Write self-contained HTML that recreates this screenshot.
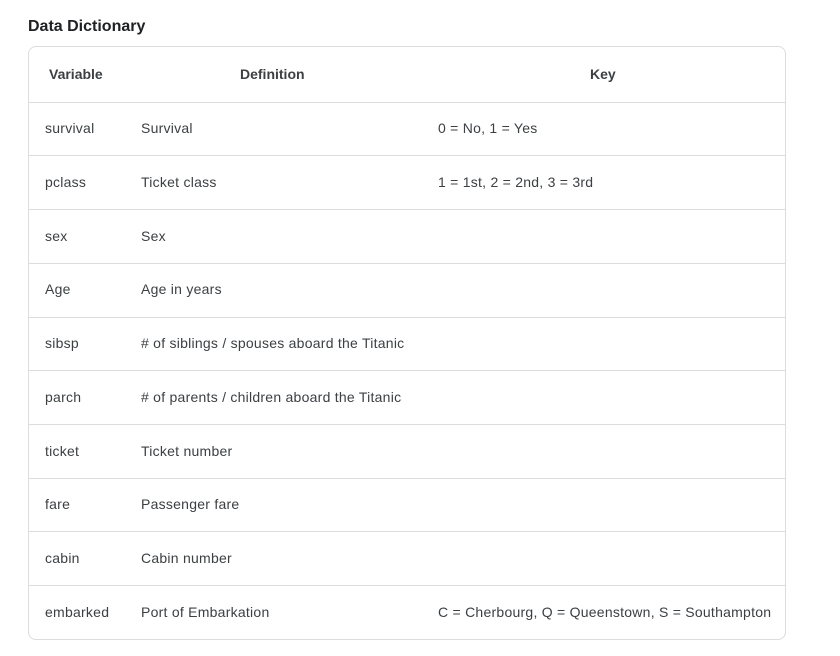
<!DOCTYPE html>
<html><head><meta charset="utf-8"><style>
body{margin:0;background:#fff;font-family:"Liberation Sans",Arial,sans-serif;color:#3c4043;width:840px;height:656px;overflow:hidden;position:relative}
h1{position:absolute;left:28px;top:18px;margin:0;font-size:16px;font-weight:bold;color:#202124}
.box{position:absolute;left:28px;top:46px;width:756px;height:592px;border:1px solid #dadce0;border-radius:8px;box-sizing:content-box}
.row{position:absolute;left:0;width:756px;font-size:14px;letter-spacing:0.25px}
.row div{position:absolute;top:0;white-space:nowrap}
.line{position:absolute;left:0;width:756px;height:1px;background:#dadce0}
.hd{font-weight:bold;font-size:14px;letter-spacing:0;color:#3c4043}
</style></head><body>
<h1>Data Dictionary</h1>
<div class="box">
<div class="row hd" style="top:19px"><div style="left:20px">Variable</div><div style="left:211px">Definition</div><div style="left:561px">Key</div></div>
<div class="line" style="top:55px"></div>
<div class="row" style="top:73px"><div style="left:16px">survival</div><div style="left:112px">Survival</div><div style="left:409px">0 = No, 1 = Yes</div></div>
<div class="line" style="top:108px"></div>
<div class="row" style="top:127px"><div style="left:16px">pclass</div><div style="left:112px">Ticket class</div><div style="left:409px">1 = 1st, 2 = 2nd, 3 = 3rd</div></div>
<div class="line" style="top:162px"></div>
<div class="row" style="top:181px"><div style="left:16px">sex</div><div style="left:112px">Sex</div></div>
<div class="line" style="top:216px"></div>
<div class="row" style="top:234px"><div style="left:16px">Age</div><div style="left:112px">Age in years</div></div>
<div class="line" style="top:270px"></div>
<div class="row" style="top:288px"><div style="left:16px">sibsp</div><div style="left:112px"># of siblings / spouses aboard the Titanic</div></div>
<div class="line" style="top:323px"></div>
<div class="row" style="top:342px"><div style="left:16px">parch</div><div style="left:112px"># of parents / children aboard the Titanic</div></div>
<div class="line" style="top:377px"></div>
<div class="row" style="top:396px"><div style="left:16px">ticket</div><div style="left:112px">Ticket number</div></div>
<div class="line" style="top:431px"></div>
<div class="row" style="top:449px"><div style="left:16px">fare</div><div style="left:112px">Passenger fare</div></div>
<div class="line" style="top:484px"></div>
<div class="row" style="top:503px"><div style="left:16px">cabin</div><div style="left:112px">Cabin number</div></div>
<div class="line" style="top:538px"></div>
<div class="row" style="top:557px"><div style="left:16px">embarked</div><div style="left:112px">Port of Embarkation</div><div style="left:409px">C = Cherbourg, Q = Queenstown, S = Southampton</div></div>
</div>
</body></html>
